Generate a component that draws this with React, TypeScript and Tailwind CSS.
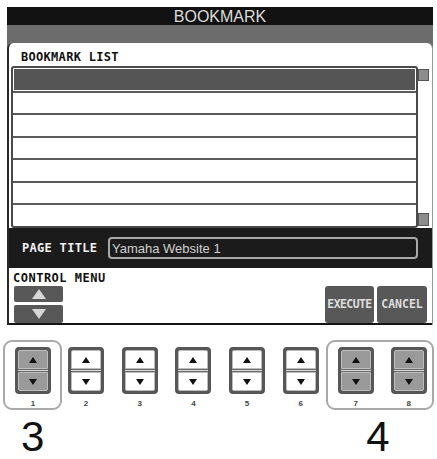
import React from "react";

const mono = "font-['DejaVu_Sans_Mono',monospace] font-bold";

function Tri({ up, className }: { up?: boolean; className?: string }) {
  return (
    <svg width="8" height="6" viewBox="0 0 8 6" className={className}>
      {up ? <polygon points="4,0 8,6 0,6" fill="#111" /> : <polygon points="0,0 8,0 4,6" fill="#111" />}
    </svg>
  );
}

function PanelButton({ active }: { active?: boolean }) {
  const fill = active ? "bg-[#9a9a9a]" : "bg-white";
  return (
    <div className="w-[36px] h-[47px] rounded-[4px] border-[3px] border-[#575757] bg-[#575757] flex flex-col">
      <div className={`flex-1 ${fill} rounded-t-[2px] border border-[#bdbdbd] flex items-center justify-center`}>
        <Tri up />
      </div>
      <div className="h-[3px] bg-[#d8d8d8] border-y border-[#6a6a6a]" />
      <div className={`flex-1 ${fill} rounded-b-[2px] border border-[#bdbdbd] flex items-center justify-center`}>
        <Tri />
      </div>
    </div>
  );
}

function Col({ n, active }: { n: number; active?: boolean }) {
  return (
    <div className="w-[36px] flex flex-col items-center">
      <PanelButton active={active} />
      <div className="mt-[6px] h-[8px] leading-[8px] text-[8px] font-bold text-[#444] font-['Liberation_Sans',sans-serif]">
        {n}
      </div>
    </div>
  );
}

export default function App() {
  const rows = [0, 1, 2, 3, 4, 5, 6];
  return (
    <div className="w-[437px] h-[459px] bg-white overflow-hidden font-['Liberation_Sans',sans-serif]">
      <div className="pt-[7px] pl-[7px]">
        <div className="w-[426px] flex flex-col">
          {/* title bar */}
          <div className="h-[18px] bg-[#121212] flex items-center justify-center text-[16px] leading-none text-[#dcdcdc] pt-[1px]">
            BOOKMARK
          </div>
          {/* gray band + body */}
          <div className="bg-[#6c6c6c] pt-[18px]">
            <div className="bg-white rounded-t-[6px] border-l-2 border-l-[#2a2a2a] border-r border-r-[#9a9a9a]">
              {/* label */}
              <div className={`${mono} h-[23px] pl-[12px] pt-[8px] text-[12px] leading-[12px] tracking-[0.3px] text-[#111]`}>
                BOOKMARK LIST
              </div>
              {/* list + scrollbar */}
              <div className="flex ml-[2px] h-[162px]">
                <div className="w-[407px] border-2 border-[#4a4a4a] rounded-[3px] flex flex-col bg-white">
                  {rows.map((i) => (
                    <div
                      key={i}
                      className={`flex-1 ${i < 6 ? "border-b-2 border-b-[#5a5a5a]" : ""} ${i === 0 ? "p-[1px]" : ""}`}
                    >
                      {i === 0 && <div className="h-full bg-[#555555]" />}
                    </div>
                  ))}
                </div>
                <div className="w-[12px] flex flex-col justify-between pt-[3px] pb-[2px]">
                  <div className="w-[11px] h-[12px] bg-[#8c8c8c] border border-[#555]" />
                  <div className="w-[11px] h-[13px] bg-[#8c8c8c] border border-[#555]" />
                </div>
              </div>
              {/* page title */}
              <div className="h-[40px] bg-[#1b1b1b] flex items-center pl-[13px]">
                <div className={`${mono} w-[86px] text-[12px] leading-none tracking-[0.3px] text-[#f0f0f0]`}>
                  PAGE TITLE
                </div>
                <div className="w-[310px] h-[22px] rounded-[4px] border-2 border-[#a8a8a8] flex items-center pl-[2px] text-[13px] text-[#d0d0d0] leading-none">
                  Yamaha Website 1
                </div>
              </div>
              {/* control menu */}
              <div className="h-[57px] flex flex-col border-b-2 border-b-[#151515]">
                <div className={`${mono} h-[19px] pl-[4px] pt-[4px] text-[12px] leading-[12px] tracking-[0.5px] text-[#111]`}>
                  CONTROL MENU
                </div>
                <div className="flex items-start pl-[5px] pr-[5px]">
                  <div className="w-[49px] flex flex-col gap-[3px]">
                    <div className="h-[16px] bg-[#585858] rounded-[2px] flex items-center justify-center">
                      <svg width="14" height="10" viewBox="0 0 14 10">
                        <polygon points="7,0 14,10 0,10" fill="#d6d6d6" />
                      </svg>
                    </div>
                    <div className="h-[18px] bg-[#585858] rounded-[2px] flex items-center justify-center">
                      <svg width="14" height="10" viewBox="0 0 14 10">
                        <polygon points="0,0 14,0 7,10" fill="#d6d6d6" />
                      </svg>
                    </div>
                  </div>
                  <div className="flex-1" />
                  <div className="flex gap-[3px]">
                    <div className={`${mono} w-[49px] h-[37px] bg-[#585858] rounded-[3px] flex items-center justify-center text-[11.5px] tracking-[-0.6px] text-[#dedede]`}>
                      EXECUTE
                    </div>
                    <div className={`${mono} w-[50px] h-[37px] bg-[#585858] rounded-[3px] flex items-center justify-center text-[11.5px] tracking-[0px] text-[#dedede]`}>
                      CANCEL
                    </div>
                  </div>
                </div>
              </div>
            </div>
          </div>
        </div>
      </div>

      {/* panel buttons */}
      <div className="flex items-start pl-[3px] mt-[15px]">
        <div className="w-[59px] h-[70px] rounded-[9px] border-2 border-[#a9a9a9] pt-[5px] pl-[10px]">
          <Col n={1} active />
        </div>
        <div className="ml-[6px] pt-[7px] flex gap-[17.7px]">
          <Col n={2} />
          <Col n={3} />
          <Col n={4} />
          <Col n={5} />
          <Col n={6} />
        </div>
        <div className="ml-[7px] w-[108px] h-[70px] rounded-[9px] border-2 border-[#a9a9a9] pt-[5px] pl-[10px] flex gap-[17px]">
          <Col n={7} active />
          <Col n={8} active />
        </div>
      </div>

      {/* step numbers */}
      <div className="flex mt-[6px] text-[42px] leading-[42px] text-[#111]">
        <div className="ml-[21px]">3</div>
        <div className="ml-[322px]">4</div>
      </div>
    </div>
  );
}
